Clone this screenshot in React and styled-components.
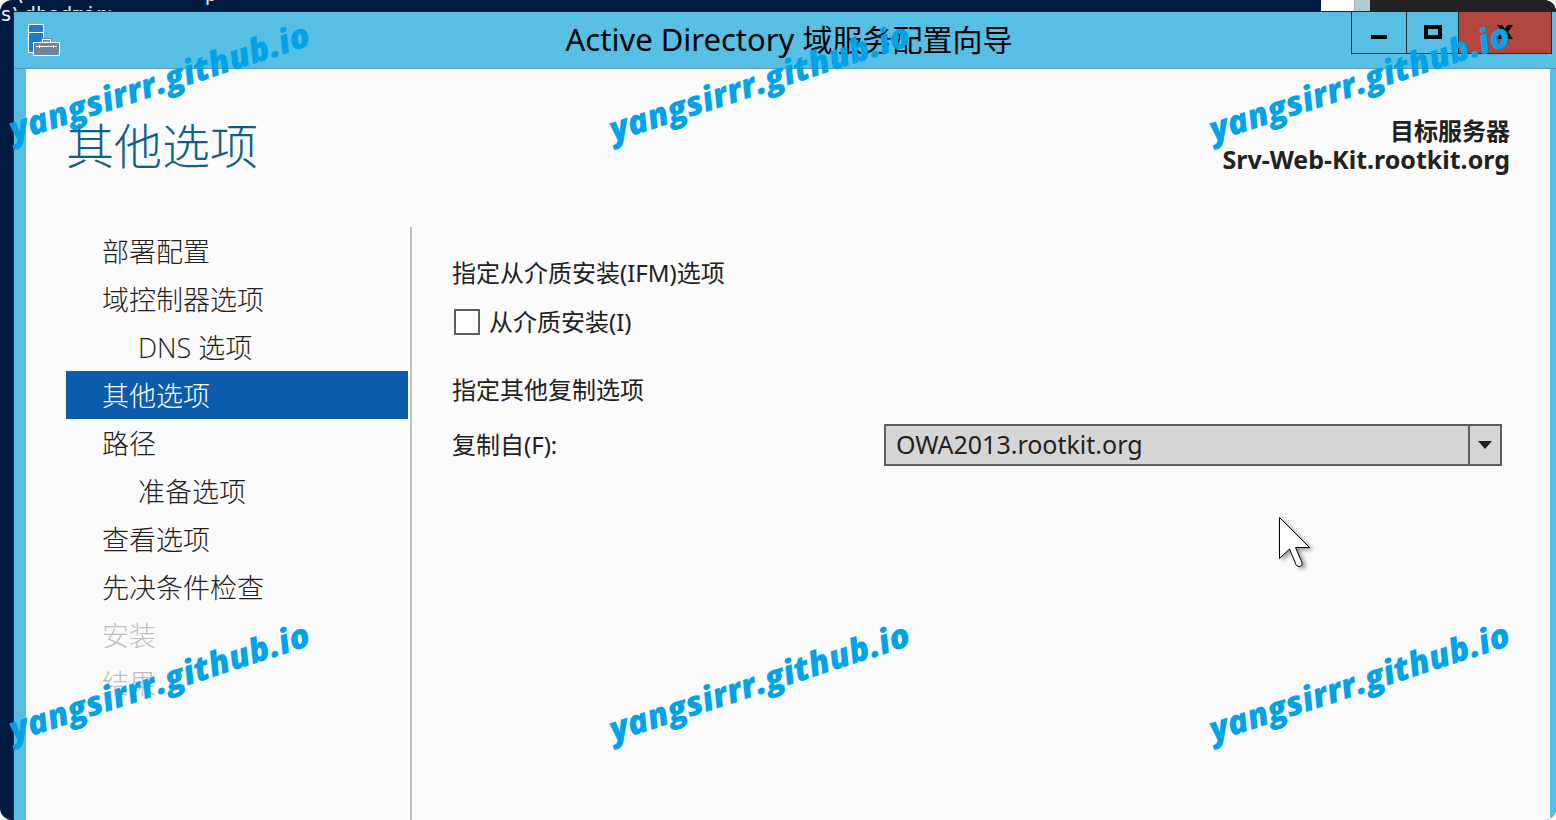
import React, { useState } from "react";
import styled, { createGlobalStyle } from "styled-components";

const Global = createGlobalStyle`
  * { box-sizing: border-box; }
  body { margin: 0; background: #fff; }
  button, input, select { font: inherit; color: inherit; }
`;

const Desktop = styled.div`
  position: relative;
  display: flex;
  flex-direction: column;
  height: 100vh;
  overflow: hidden;
  border-radius: 12px;
  background: #001a40;
  font-family: "Noto Sans", "Noto Sans CJK SC", sans-serif;
  font-size: 24px;
  color: #212121;
`;

const Backdrop = styled.div`
  position: absolute;
  inset: 0 0 auto 0;
  display: flex;
  height: 24px;
`;

const Terminal = styled.div`
  flex: 1;
  display: flex;
  flex-direction: column;
  justify-content: flex-end;
  font: 20px/20px "DejaVu Sans Mono", monospace;
  color: #eeedf0;
  white-space: pre;
`;

const ScrollThumb = styled.div`
  width: 34px;
  background: #fff;
  border-right: 1px solid #b0b0b0;
`;

const ScrollTrack = styled.div`
  width: 15px;
  background: #b4cad3;
`;

const DarkWindow = styled.div`
  width: 186px;
  background: #222;
`;

const Window = styled.main`
  position: relative;
  flex: 1;
  display: flex;
  flex-direction: column;
  margin: 11px 0 0 13px;
  border: solid #242424;
  border-width: 1px 0 0 1px;
  background: #57bee4;
`;

const TitleBar = styled.header`
  display: grid;
  grid-template-columns: 1fr auto 1fr;
  height: 57px;
  padding: 0 4px 0 12px;
  border-bottom: 1px solid #5b93b3;
`;

const AppIcon = styled.svg`
  width: 36px;
  height: 36px;
  margin-top: 11px;
`;

const WindowTitle = styled.h1`
  margin: 0;
  font-size: 31px;
  font-weight: 400;
  line-height: 54px;
  color: #000;
`;

const Han = styled.span`
  font-size: 30px;
`;

const WindowControls = styled.div`
  justify-self: end;
  display: flex;
  height: 42px;
  border: solid #242a2e;
  border-width: 0 1px 1px 1px;
`;

const ControlButton = styled.button`
  display: grid;
  place-items: center;
  width: ${(p) => p.$width}px;
  padding: 0 0 2px;
  border: 0;
  border-left: ${(p) => (p.$first ? 0 : "1px solid #242a2e")};
  background: ${(p) => (p.$close ? "#b44640" : "transparent")};
`;

const Panel = styled.section`
  flex: 1;
  display: flex;
  flex-direction: column;
  margin: 0 6px 0 12px;
  background: #fbfbfb;
`;

const PanelHeader = styled.div`
  display: flex;
  justify-content: space-between;
  height: 158px;
  padding: 47px 40px 0;
`;

const PageTitle = styled.h2`
  margin: 0;
  font-size: 48px;
  font-weight: 300;
  line-height: 60px;
  color: #0b6187;
`;

const Target = styled.div`
  font-weight: 700;
  line-height: 29px;
  text-align: right;
`;

const ServerName = styled.div`
  font-size: 25px;
`;

const PanelBody = styled.div`
  flex: 1;
  display: flex;
`;

const Steps = styled.nav`
  width: 386px;
  padding: 0 2px 0 40px;
  border-right: 2px solid #c0c0c0;
`;

const Step = styled.a`
  display: block;
  height: 48px;
  padding-left: ${(p) => (p.$nested ? 72 : 36)}px;
  font-family: "Open Sans", "Noto Sans CJK SC", sans-serif;
  font-size: 27px;
  font-weight: 300;
  line-height: 50px;
  text-decoration: none;
  color: ${(p) => (p.$active ? "#fff" : p.$disabled ? "#c0c0c0" : "#212121")};
  background: ${(p) => (p.$active ? "#0b5cad" : "transparent")};
`;

const Form = styled.form`
  flex: 1;
  padding: 28px 48px 0 40px;
`;

const SectionTitle = styled.h3`
  margin: 0;
  font-size: 24px;
  font-weight: 400;
  line-height: 36px;
`;

const CheckRow = styled.label`
  display: flex;
  align-items: center;
  gap: 9px;
  height: 36px;
  margin: 13px 0 32px 2px;
`;

const LabelText = styled.span`
  padding-bottom: 4px;
`;

const Checkbox = styled.input`
  appearance: none;
  width: 26px;
  height: 26px;
  margin: 0;
  border: 2px solid #5e5e5e;
  background: #fff;
  &:checked { background: #5e5e5e; }
`;

const FieldRow = styled.div`
  display: grid;
  grid-template-columns: 432px 1fr;
  align-items: center;
  margin-top: 16px;
`;

const FieldLabel = styled.label`
  padding-bottom: 4px;
`;

const SelectBox = styled.div`
  display: grid;
  grid-template-columns: 1fr 32px;
  border: 2px solid #5e5e5e;
  background: #d5d5d5;
`;

const Select = styled.select`
  grid-area: 1 / 1 / 2 / 3;
  appearance: none;
  height: 38px;
  padding: 0 40px 2px 10px;
  border: 0;
  border-radius: 0;
  background: transparent;
  font-size: 25px;
`;

const SelectArrow = styled.span`
  grid-area: 1 / 2 / 2 / 3;
  display: grid;
  place-items: center;
  border-left: 2px solid #5e5e5e;
  pointer-events: none;
`;

const Watermarks = styled.div`
  position: absolute;
  inset: 0 auto auto 0;
  display: grid;
  grid-template-columns: repeat(3, 600px);
  grid-auto-rows: 600px;
  pointer-events: none;
`;

const Watermark = styled.span`
  display: grid;
  place-items: center;
  width: 318px;
  height: 162px;
  font: italic 800 34px/40px "Open Sans", sans-serif;
  color: #00a2e8;
  transform: rotate(-18deg);
`;

const Pointer = styled.svg`
  position: absolute;
  left: 1278px;
  top: 516px;
  filter: drop-shadow(3px 2px 2px rgba(0, 0, 0, 0.4));
`;

const STEPS = [
  { label: "部署配置" },
  { label: "域控制器选项" },
  { label: "DNS 选项", nested: true },
  { label: "其他选项", active: true },
  { label: "路径" },
  { label: "准备选项", nested: true },
  { label: "查看选项" },
  { label: "先决条件检查" },
  { label: "安装", disabled: true },
  { label: "结果", disabled: true },
];

export default function App() {
  const [checked, setChecked] = useState(false);
  return (
    <>
      <Global />
      <Desktop>
        <Backdrop>
          <Terminal>
            <div>{" \\               p"}</div>
            <div>s\dbadmin&gt;</div>
          </Terminal>
          <ScrollThumb />
          <ScrollTrack />
          <DarkWindow />
        </Backdrop>
        <Window>
          <TitleBar>
            <AppIcon viewBox="0 0 36 36" aria-hidden="true" shapeRendering="crispEdges">
              <rect x="2.5" y="1.5" width="15" height="28" fill="#1a7ad4" stroke="#fff" />
              <path d="M3 9.5h14" stroke="#fff" />
              <path d="M16.5 19v-2.500h8V19" fill="none" stroke="#6b869a" strokeWidth="3" />
              <path d="M16.5 19v-2.500h8V19" fill="none" stroke="#fff" />
              <rect x="7.500" y="19.500" width="26" height="13" rx="1" fill="#6b869a" stroke="#fff" />
              <path d="M10 23.500h21M13.500 22v3M27.500 22v3" stroke="#fff" />
            </AppIcon>
            <WindowTitle>Active Directory <Han>域服务配置向导</Han></WindowTitle>
            <WindowControls>
              <ControlButton type="button" $first $width={54} aria-label="最小化">
                <svg width="16" height="16" aria-hidden="true"><path d="M0 11h16v4H0z" /></svg>
              </ControlButton>
              <ControlButton type="button" $width={52} aria-label="最大化">
                <svg width="18" height="14" aria-hidden="true"><path d="M2 2h14v10H2z" fill="none" stroke="#000" strokeWidth="4" /></svg>
              </ControlButton>
              <ControlButton type="button" $close $width={93} aria-label="关闭">
                <svg width="16" height="14" aria-hidden="true"><path d="M0 0h5l3 4 3-4h5l-5 7 5 7h-5l-3-4-3 4H0l5-7z" /></svg>
              </ControlButton>
            </WindowControls>
          </TitleBar>
          <Panel>
            <PanelHeader>
              <PageTitle>其他选项</PageTitle>
              <Target>
                <div>目标服务器</div>
                <ServerName>Srv-Web-Kit.rootkit.org</ServerName>
              </Target>
            </PanelHeader>
            <PanelBody>
              <Steps>
                {STEPS.map((s) => (
                  <Step key={s.label} href="#" $nested={s.nested} $active={s.active} $disabled={s.disabled}>
                    {s.label}
                  </Step>
                ))}
              </Steps>
              <Form>
                <SectionTitle>指定从介质安装(IFM)选项</SectionTitle>
                <CheckRow>
                  <Checkbox type="checkbox" checked={checked} onChange={(e) => setChecked(e.target.checked)} />
                  <LabelText>从介质安装(I)</LabelText>
                </CheckRow>
                <SectionTitle>指定其他复制选项</SectionTitle>
                <FieldRow>
                  <FieldLabel htmlFor="source">复制自(F):</FieldLabel>
                  <SelectBox>
                    <Select id="source">
                      <option>OWA2013.rootkit.org</option>
                    </Select>
                    <SelectArrow>
                      <svg width="14" height="8" aria-hidden="true"><path d="M0 0h14L7 8z" fill="#212121" /></svg>
                    </SelectArrow>
                  </SelectBox>
                </FieldRow>
              </Form>
            </PanelBody>
          </Panel>
        </Window>
        <Watermarks aria-hidden="true">
          {[0, 1, 2, 3, 4, 5].map((n) => (
            <Watermark key={n}>yangsirrr.github.io</Watermark>
          ))}
        </Watermarks>
        <Pointer width="34" height="52" viewBox="0 0 34 52" aria-hidden="true">
          <path d="M1.500 1.500V42.500L11.500 33L18 48.500Q19 50.500 21 50.500Q25 50 24 46.500L17.500 31.500H31.500Z" fill="#fff" stroke="#000" />
        </Pointer>
      </Desktop>
    </>
  );
}
